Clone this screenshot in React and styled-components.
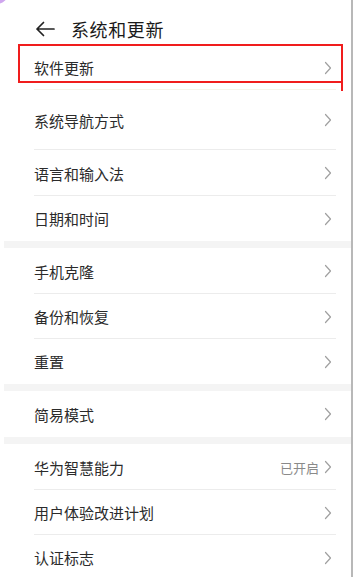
import React from 'react';
import styled, { createGlobalStyle } from 'styled-components';

const GlobalStyle = createGlobalStyle`
  html, body {
    margin: 0;
    padding: 0;
    background: #ffffff;
  }
  body {
    font-family: "Noto Sans CJK SC", "Noto Sans", sans-serif;
    -webkit-font-smoothing: antialiased;
  }
`;

const Page = styled.div`
  position: relative;
  width: 351px;
  height: 577px;
  overflow: hidden;
  background: #fff;
  border-right: 2px solid #b8b8b8;
`;

const Corner = styled.div`
  position: absolute;
  left: -14px;
  top: -18px;
  width: 22px;
  height: 22px;
  border-radius: 50%;
  background: #cfa6ee;
`;

const Header = styled.div`
  height: 45px;
  display: flex;
  align-items: center;
  padding-left: 35px;
  gap: 16px;
  box-sizing: border-box;
  padding-top: 12px;
`;

const Title = styled.div`
  font-size: 18px;
  color: #1a1a1a;
  letter-spacing: 0.6px;
`;

const Group = styled.div`
  display: flex;
  flex-direction: column;
`;

const Row = styled.div`
  position: relative;
  height: ${p => p.h || 45}px;
  display: flex;
  align-items: center;
  padding: 0 19px 0 34px;
  box-sizing: border-box;
  &:not(:last-child)::after {
    content: '';
    position: absolute;
    left: 34px;
    right: 15px;
    bottom: 0;
    height: 1px;
    background: ${p => (p.faint ? '#f6f3ea' : '#ececec')};
  }
`;

const Label = styled.div`
  flex: 1;
  font-size: 15px;
  color: #2b2b2b;
`;

const Value = styled.span`
  font-size: 13px;
  color: #8a8a8a;
  margin-right: 5px;
`;

const Band = styled.div`
  height: 7px;
  margin-left: 4px;
  background: #f4f4f4;
`;

const Highlight = styled.div`
  position: absolute;
  left: 18px;
  top: -1px;
  width: 325px;
  height: 39px;
  border: 2px solid #f01d1d;
  box-sizing: border-box;
  &::after {
    content: '';
    position: absolute;
    right: -2px;
    top: 37px;
    width: 2px;
    height: 8px;
    background: #f01d1d;
  }
`;

const BackArrow = () => (
  <svg width="20" height="16" viewBox="0 0 20 16" fill="none">
    <path d="M19 8H2M8.5 1.5L2 8l6.5 6.5" stroke="#222" strokeWidth="1.7" strokeLinecap="round" strokeLinejoin="round" />
  </svg>
);

const Chevron = () => (
  <svg width="8" height="14" viewBox="0 0 8 14" fill="none">
    <path d="M1.5 1.5L6.5 7L1.5 12.5" stroke="#a0a0a0" strokeWidth="1.2" strokeLinecap="round" strokeLinejoin="round" />
  </svg>
);

const Item = ({ label, value, h, faint, children }) => (
  <Row h={h} faint={faint}>
    {children}
    <Label>{label}</Label>
    {value && <Value>{value}</Value>}
    <Chevron />
  </Row>
);

export default function App() {
  return (
    <>
      <GlobalStyle />
      <Page>
        <Corner />
        <Header>
          <BackArrow />
          <Title>系统和更新</Title>
        </Header>
        <Group>
          <Item label="软件更新" h={45} faint>
            <Highlight />
          </Item>
          <Item label="系统导航方式" h={60} />
          <Item label="语言和输入法" h={46} />
          <Item label="日期和时间" h={45} />
        </Group>
        <Band />
        <Group>
          <Item label="手机克隆" h={46} />
          <Item label="备份和恢复" h={45} />
          <Item label="重置" h={45} />
        </Group>
        <Band />
        <Group>
          <Item label="简易模式" h={46} />
        </Group>
        <Band />
        <Group>
          <Item label="华为智慧能力" value="已开启" h={46} />
          <Item label="用户体验改进计划" h={45} />
          <Item label="认证标志" h={45} />
        </Group>
      </Page>
    </>
  );
}
